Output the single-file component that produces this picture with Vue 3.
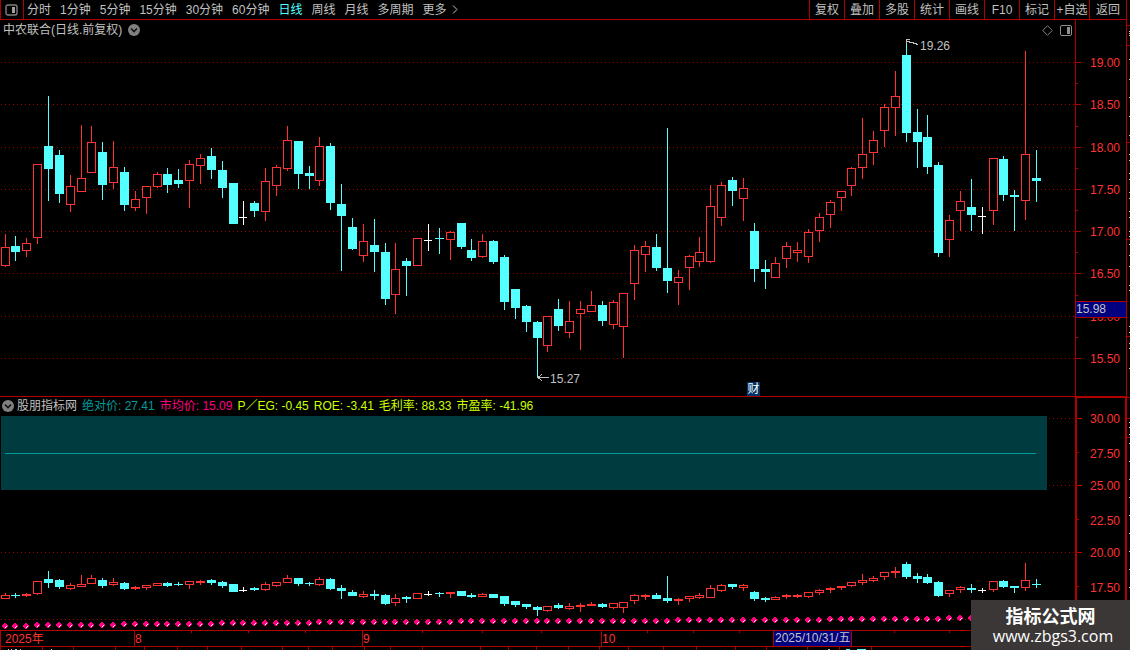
<script setup>
const periods = ['分时', '1分钟', '5分钟', '15分钟', '30分钟', '60分钟', '日线', '周线', '月线', '多周期', '更多']
const actions = ['复权', '叠加', '多股', '统计', '画线', 'F10', '标记', '+自选', '返回']

const indicators = [
  { name: '绝对价', value: '27.41', tone: 'teal' },
  { name: '市均价', value: '15.09', tone: 'pink' },
  { name: 'P／EG', value: '-0.45', tone: 'lime' },
  { name: 'ROE', value: '-3.41', tone: 'lime' },
  { name: '毛利率', value: '88.33', tone: 'lime' },
  { name: '市盈率', value: '-41.96', tone: 'lime' },
]

// One row per day: kind (r up, c down, w flat), high, body top, body bottom, low.
const rows = `r 234 247 266 267,c 236 246 252 261,r 238 243 251 257,r 164 164 238 244,c 96 146 169 201,c 150 155 194 203,
r 175 186 205 212,r 125 178 192 192,r 126 142 173 173,c 142 152 185 200,r 141 167 183 189,c 167 172 205 211,
r 191 199 208 211,r 186 186 198 214,r 172 174 187 188,c 168 174 185 193,c 169 180 184 188,r 160 164 181 208,
r 154 158 166 184,c 148 156 170 179,c 161 170 188 198,c 183 183 224 224,w 201 217 218 225,c 201 203 211 217,
r 168 181 212 221,r 165 167 186 196,r 126 140 169 171,c 141 141 174 189,c 166 173 176 189,r 137 146 181 186,
c 143 146 203 210,c 184 204 216 271,c 218 227 249 250,r 224 241 256 262,c 219 245 252 272,c 243 252 299 305,
r 243 269 295 314,c 258 261 266 296,r 238 238 266 266,w 224 240 241 251,c 228 238 239 254,r 231 232 240 260,
c 223 223 247 249,c 239 250 258 261,r 234 241 257 258,c 240 241 262 264,c 255 257 302 310,c 289 289 308 319,
c 305 306 322 332,c 321 322 338 377,r 316 316 346 352,c 299 309 326 331,r 301 321 333 338,r 301 309 314 350,
r 291 305 312 312,c 301 305 321 326,r 300 302 325 329,r 293 293 327 358,r 245 250 284 300,r 241 246 255 272,
c 234 247 268 271,c 128 268 281 293,r 270 277 283 305,r 255 256 268 290,r 237 252 262 267,r 185 206 262 263,
r 182 185 218 226,c 177 180 191 206,r 178 188 199 221,c 223 231 269 282,c 260 269 272 289,r 257 263 278 278,
r 242 246 259 268,r 242 250 253 262,r 229 232 257 263,r 213 217 231 242,r 200 202 215 228,r 191 191 198 211,
r 167 168 186 196,r 118 154 168 179,r 131 140 153 165,r 104 107 131 147,r 71 96 108 136,c 40 55 133 142,
c 109 132 142 168,c 115 137 167 174,c 162 165 253 257,r 215 220 240 257,r 191 201 211 231,c 179 207 215 231,
w 207 216 217 234,r 158 158 211 225,c 156 159 195 201,c 190 195 197 231,r 51 154 201 220,c 150 178 181 202`

const candles = rows.split(',').map((row, i) => {
  const [kind, ...n] = row.trim().split(' ')
  const [high, top, bottom, low] = n.map((v) => Number(v) - 40)
  return { kind, high, top, bottom, low, x: Math.floor(1 + (i * 76) / 7) }
})

const shrink = (y) => Math.round(149.2 + (y - 22) * 0.1594)
const miniCandles = candles.map((c) => ({
  ...c,
  high: shrink(c.high),
  top: shrink(c.top),
  bottom: shrink(c.bottom - 1) + 1,
  low: shrink(c.low - 1) + 1,
}))

const dotSteps = [3, 11, 20, 29, 42, 62, 76, 87]
const dots = candles.map((c, i) => ({
  x: c.x + 4,
  y: 210 - dotSteps.filter((s) => i >= s).length,
}))

const panels = [candles, miniCandles]

const priceTicks = [
  [22, '19.00'], [64, '18.50'], [107, '18.00'], [149, '17.50'],
  [191, '17.00'], [233, '16.50'], [276, '16.00'], [318, '15.50'],
]
const priceMinor = [43, 86, 128, 170, 212, 255, 297]
const valueTicks = [[2, '30.00'], [36, '27.50', 1], [69, '25.00'], [103, '22.50', 1], [136, '20.00'], [170, '17.50', 1], [203, '']]

const months = [[0, '2025年'], [134, '8'], [362, '9'], [601, '10']]
const weekTicks = [191, 248, 305, 422, 482, 541, 647, 693, 739, 894, 949]
const tabTicks = [0, 42, 73, 115, 144, 177, 207, 241, 282, 308, 332, 364, 390, 422, 480, 508, 536, 568, 599, 628, 663, 696, 735, 766, 807, 839, 871]
const edgeRed = [25, 45, 142, 239, 336, 397, 418, 437]
const edgeWhite = [31, 33, 35, 59, 79, 97, 116, 135, 154, 160, 173, 179, 192, 198, 211, 217, 231, 236, 244, 255, 266, 285, 290, 326, 332, 343, 348, 368, 422, 427, 434, 443, 461, 479, 497, 515, 533, 551, 569, 587]
</script>

<template>
  <div class="app">
    <main class="main">
      <header class="toolbar">
        <button class="layout-btn" aria-label="布局">
          <svg width="13" height="12" viewBox="0 0 13 12"><rect x="1" y="1" width="11" height="10" rx="2" fill="none" stroke="#808080" stroke-width="1.4" /><rect x="7" y="3" width="3" height="6" fill="#a0a0a0" /></svg>
        </button>
        <nav class="periods">
          <button v-for="p in periods" :key="p" :class="{ active: p === '日线' }">{{ p }}</button>
          <svg class="more" width="6" height="9" viewBox="0 0 6 9"><path d="M1 .5l4 4-4 4" fill="none" stroke="#c0c0c0" /></svg>
        </nav>
        <nav class="actions">
          <button v-for="a in actions" :key="a">{{ a }}</button>
        </nav>
      </header>

      <section class="pane">
        <div class="plot">
          <div class="title">
            <span>中农联合(日线.前复权)</span>
            <svg width="12" height="12" viewBox="0 0 12 12"><circle cx="6" cy="6" r="6" fill="#808080" /><path d="M3 4.5l3 3 3-3" fill="none" stroke="#111" stroke-width="1.6" /></svg>
            <span class="tools">
              <svg width="11" height="11" viewBox="0 0 11 11"><path d="M5.5 .7l4.8 4.8-4.8 4.8L.7 5.5z" fill="none" stroke="#808080" /></svg>
              <svg width="12" height="11" viewBox="0 0 12 11"><rect x=".5" y=".5" width="11" height="10" rx="1.5" fill="none" stroke="#909090" /><rect x="7" y="2" width="3" height="7" fill="#909090" /></svg>
            </span>
          </div>
          <svg class="chart" width="100%" height="356">
            <line v-for="t in priceTicks" :key="t[0]" class="grid" x1="1" x2="100%" :y1="t[0] + 0.5" :y2="t[0] + 0.5" />
            <g v-for="c in panels[0]" :key="c.x" :class="c.kind">
              <rect :x="c.x + 4" :y="c.high" width="1" :height="c.low - c.high" />
              <rect v-if="c.kind === 'r'" class="hollow" :x="c.x + 0.5" :y="c.top + 0.5" width="8" :height="c.bottom - c.top - 1" />
              <rect v-else :x="c.x" :y="c.top" :width="c.kind === 'w' ? 8 : 9" :height="c.bottom - c.top" />
            </g>
            <path class="pointer" d="M538 337.5h11M542 334.5l-4 3 4 3M907 1.5l5 1 6 2M910 -.5h-3.5v4" />
            <text x="550" y="343">15.27</text>
            <text x="920" y="10">19.26</text>
          </svg>
          <span class="news">财</span>
        </div>
        <div class="scale">
          <svg width="100%" height="100%">
            <rect v-for="m in priceMinor" :key="m" x="0" :y="m + 20" width="2" height="1" />
            <g v-for="t in priceTicks" :key="t[1]">
              <rect x="0" :y="t[0] + 20" width="5" height="1" />
              <text x="14" :y="t[0] + 25">{{ t[1] }}</text>
            </g>
          </svg>
          <span class="cursor-price">15.98</span>
        </div>
      </section>

      <section class="pane lower">
        <div class="plot">
          <div class="title values">
            <svg width="12" height="12" viewBox="0 0 12 12"><circle cx="6" cy="6" r="6" fill="#808080" /><path d="M3 4.5l3 3 3-3" fill="none" stroke="#111" stroke-width="1.6" /></svg>
            <span>股朋指标网</span>
            <span v-for="v in indicators" :key="v.name" :class="v.tone">{{ v.name }}: {{ v.value }}</span>
          </div>
          <svg class="chart" width="100%" height="214">
            <template v-for="t in valueTicks" :key="t[0]">
              <line v-if="!t[2]" class="grid" x1="1" x2="100%" :y1="t[0] + 0.5" :y2="t[0] + 0.5" />
            </template>
            <rect class="band" x="1" y="0" width="1046" height="74" />
            <rect class="band-line" x="5" y="37" width="1031" height="1" />
            <g v-for="c in panels[1]" :key="c.x" :class="c.kind">
              <rect :x="c.x + 4" :y="c.high" width="1" :height="c.low - c.high" />
              <rect v-if="c.kind === 'r'" class="hollow" :x="c.x + 0.5" :y="c.top + 0.5" width="8" :height="Math.max(c.bottom - c.top - 1, 1)" />
              <rect v-else :x="c.x" :y="c.top" :width="c.kind === 'w' ? 8 : 9" :height="c.bottom - c.top" />
            </g>
            <g v-for="d in dots" :key="d.x">
              <path class="dot" :d="`M${d.x - 1} ${d.y - 3}h2v1h1v1h1v2h-1v1h-1v1h-2v-1h-1v-1h-1v-2h1v-1h1z`" />
              <path class="glint" :d="`M${d.x + 1} ${d.y}h1v1h-1v1h-1v-1h1z`" />
            </g>
          </svg>
        </div>
        <div class="scale">
          <svg width="100%" height="100%">
            <g v-for="t in valueTicks" :key="t[0]">
              <rect x="0" :y="t[0] + 18" :width="t[2] ? 2 : 5" height="1" />
              <text x="13" :y="t[0] + (t[2] ? 24 : 23)">{{ t[1] }}</text>
            </g>
          </svg>
        </div>
      </section>

      <footer class="timeline">
        <svg width="100%" height="16">
          <rect v-for="w in weekTicks" :key="w" :x="w" y="0" width="1" height="2" />
          <g v-for="(m, i) in months" :key="m[1]">
            <rect :x="m[0]" y="0" width="1" height="16" />
            <text :x="m[0] + (i ? 1 : 5)" y="12">{{ m[1] }}</text>
          </g>
        </svg>
        <span class="cursor-date">2025/10/31/五</span>
      </footer>
      <div class="tabs">
        <svg width="100%" height="3">
          <rect v-for="t in tabTicks" :key="t" :x="t" y="0" width="1" height="3" />
          <path class="tab-text" d="M8 2h1v1h-1zM11 2h1v1h-1zM15 2h2v1h-2zM20 2h1v1h-1zM51 2h1v1h-1zM828 2h2v1h-2z" />
          <path class="tab-cyan" d="M846 2h4v1h-4zM857 2h9v1h-9z" />
        </svg>
      </div>
    </main>

    <aside class="edge">
      <svg width="3" height="100%">
        <rect v-for="y in edgeRed" :key="y" x="0" :y="y" width="3" height="1" />
        <rect v-for="y in edgeWhite" :key="y" class="white" x="2" :y="y" width="1" height="1" />
      </svg>
    </aside>

    <div class="watermark">
      <strong>指标公式网</strong>
      <span>www.zbgs3.com</span>
    </div>
  </div>
</template>

<style>
body {
  background: #000;
}
</style>

<style scoped>
.app {
  position: relative;
  display: flex;
  min-height: 100vh;
  overflow: hidden;
  background: #000;
  color: #c0c0c0;
  font: 12px/16px "Liberation Sans", "Noto Sans CJK SC", sans-serif;
  white-space: nowrap;
}
svg {
  display: block;
  flex: none;
}
.main {
  flex: 1;
  min-width: 0;
  display: flex;
  flex-direction: column;
}
button {
  padding: 0;
  border: 0;
  background: none;
  color: inherit;
  font: inherit;
}
.toolbar {
  display: flex;
  height: 19px;
  border-bottom: 1px solid #b00000;
}
.layout-btn {
  width: 24px;
  padding: 0 4px;
  border: solid #b00000;
  border-width: 0 1px;
}
.periods {
  display: flex;
  flex: 1;
  align-items: center;
  gap: 9px;
  padding-left: 3px;
}
.more {
  margin-left: -4px;
}
.periods .active {
  color: #54ffff;
}
.actions {
  display: flex;
}
.actions button {
  width: 35px;
  border-left: 1px solid #b00000;
}
.actions button:last-child {
  width: 37px;
}
.pane {
  display: flex;
  border-bottom: 1px solid #b00000;
}
.plot {
  position: relative;
  flex: 1;
  min-width: 0;
}
.title {
  display: flex;
  align-items: center;
  gap: 6px;
  height: 20px;
  padding-left: 3px;
}
.tools {
  display: flex;
  gap: 7px;
  margin-left: auto;
  padding-right: 3px;
}
.values {
  gap: 5px;
  height: 17px;
  margin-bottom: 2px;
  padding: 0 0 0 2px;
}
.values svg {
  margin-right: -2px;
}
.chart {
  overflow: visible;
  shape-rendering: crispEdges;
}
.grid {
  stroke: #a00000;
  stroke-dasharray: 1 3;
}
.r {
  fill: #ff3232;
}
.c {
  fill: #54ffff;
}
.w {
  fill: #fff;
}
.hollow {
  fill: #000;
  stroke: #ff3232;
}
.pointer {
  fill: none;
  stroke: #c0c0c0;
}
.chart text {
  fill: #c0c0c0;
}
.news {
  position: absolute;
  right: 315px;
  bottom: 0;
  width: 13px;
  height: 14px;
  background: #003366;
  color: #fff;
  line-height: 14px;
  text-align: center;
}
.scale {
  position: relative;
  width: 50px;
  border-left: 1px solid #b00000;
}
.scale svg {
  position: absolute;
}
.scale rect,
.timeline rect,
.tabs rect,
.edge rect {
  fill: #b00000;
}
.scale text,
.timeline text {
  fill: #ff3232;
}
.cursor-price {
  position: absolute;
  top: 281px;
  left: 0;
  right: 0;
  border: solid #b00000;
  border-width: 1px 0;
  background: #000080;
  line-height: 15px;
}
.lower .scale {
  width: 48px;
  margin-top: -1px;
  border: solid #b00000;
  border-width: 2px 1px 0 2px;
}
.teal {
  color: #009c9c;
}
.pink {
  color: #ff0080;
}
.lime {
  color: #ccff00;
}
.band {
  fill: #003c3f;
}
.band-line {
  fill: #009c9c;
}
.dot {
  fill: #ff0080;
}
.glint {
  fill: #fff;
}
.timeline {
  position: relative;
  height: 15px;
  overflow: hidden;
}
.cursor-date {
  position: absolute;
  top: 0;
  left: 773px;
  padding: 0 1px;
  border: solid #b00000;
  border-width: 0 1px;
  background: #000080;
  line-height: 15px;
}
.tabs {
  border-top: 1px solid #b00000;
}
.tabs .tab-text,
.edge .white {
  fill: #c0c0c0;
}
.tab-cyan {
  fill: #54ffff;
}
.edge {
  position: relative;
  width: 3px;
  border-left: 1px solid #b00000;
}
.edge svg {
  position: absolute;
}
.watermark {
  position: absolute;
  right: 0;
  bottom: 0;
  width: 159px;
  height: 50px;
  background: #3b3736;
  color: #fff;
  text-align: center;
}
.watermark strong,
.watermark span {
  display: block;
}
.watermark strong {
  padding-top: 5px;
  font: bold 18px/20px "Noto Sans CJK SC", sans-serif;
}
.watermark span {
  padding-left: 5px;
  font: 16px/22px "Open Sans", sans-serif;
}
</style>
